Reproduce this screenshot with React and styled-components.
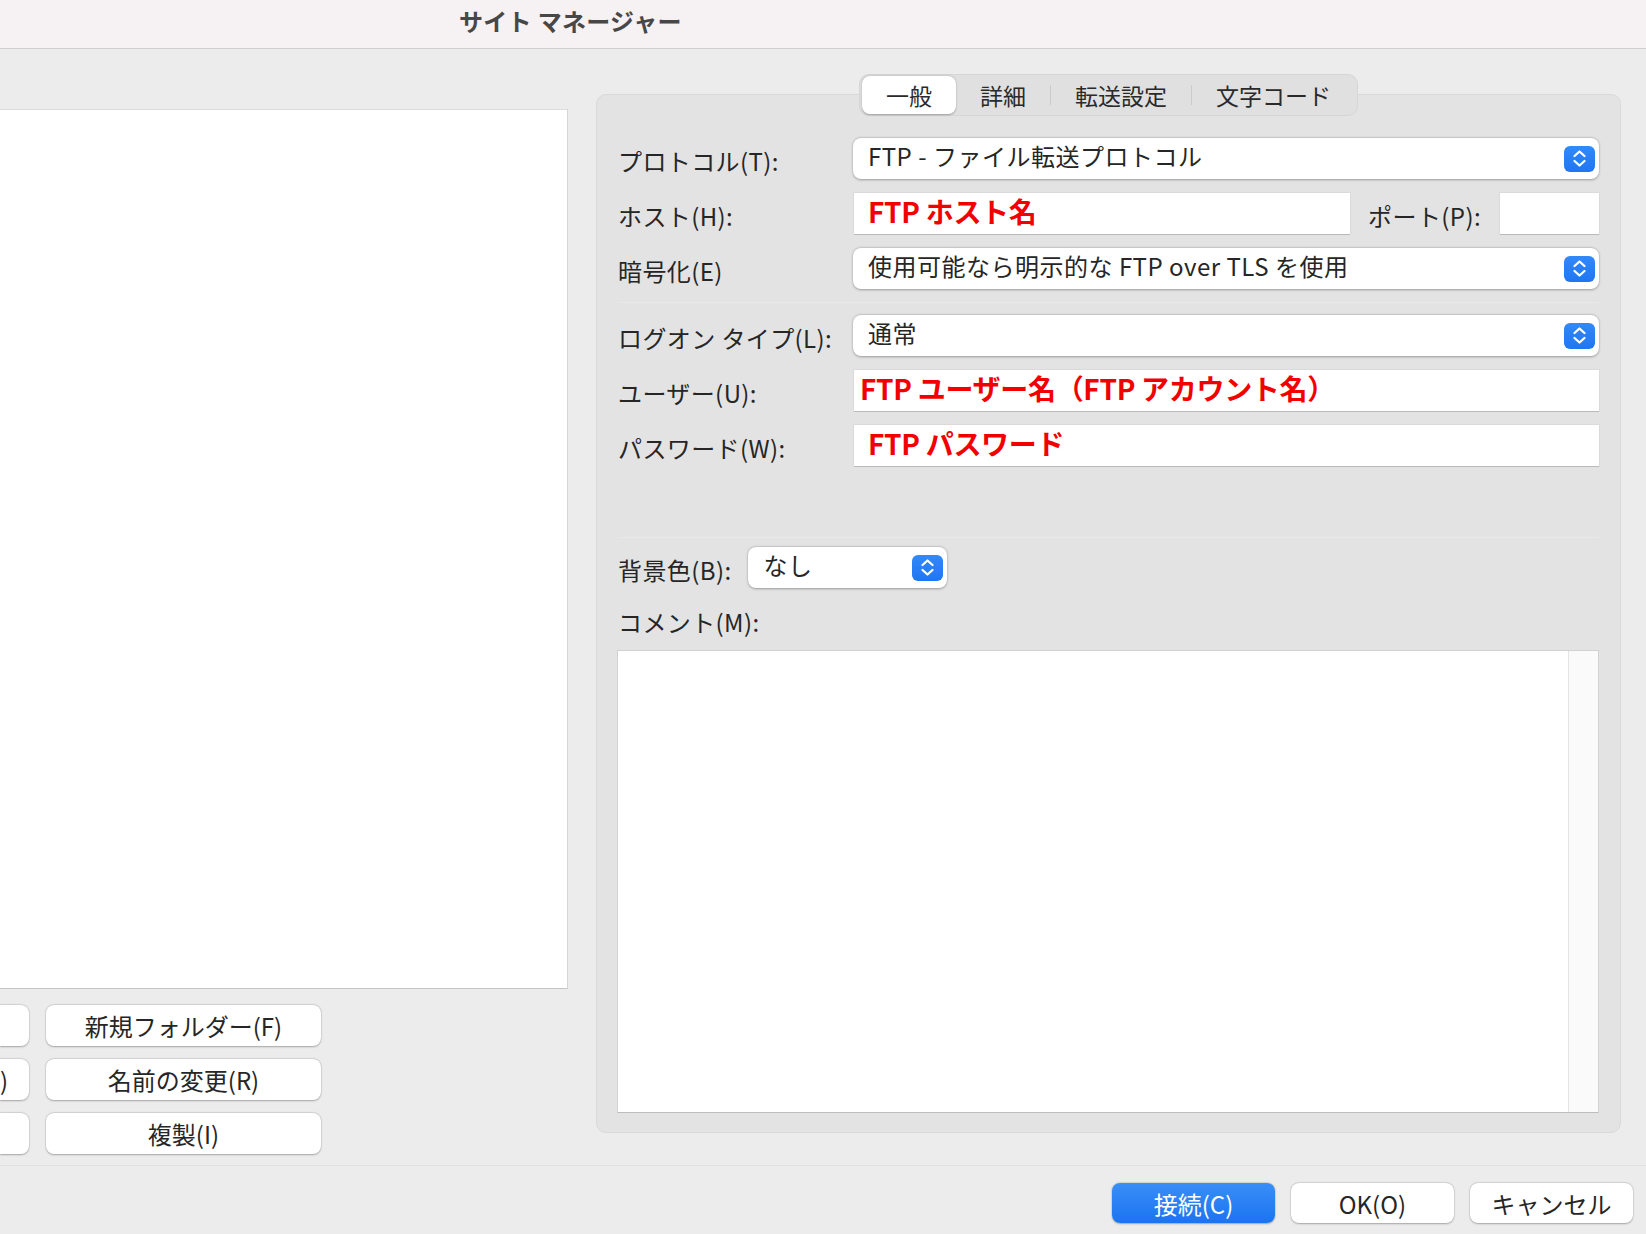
import React from 'react';
import styled, { createGlobalStyle } from 'styled-components';

const FONT = `"Noto Sans CJK JP", "Noto Sans", sans-serif`;

const GlobalStyle = createGlobalStyle`
    html, body {
        margin: 0;
        padding: 0;
        background: #ececec;
    }
    body {
        font-family: ${FONT};
        color: #262626;
    }
    * { box-sizing: border-box; }
`;

const Chevrons = () => (
    <svg width="31" height="25" viewBox="0 0 31 25">
        <path d="M10.5 10 L15.5 5.5 L20.5 10" fill="none" stroke="#fff" strokeWidth="2.3" strokeLinecap="round" strokeLinejoin="round" />
        <path d="M10.5 15 L15.5 19.5 L20.5 15" fill="none" stroke="#fff" strokeWidth="2.3" strokeLinecap="round" strokeLinejoin="round" />
    </svg>
);

const PopUp = ({ value, width }) => (
    <Select $width={width}>
        <SelectValue>{value}</SelectValue>
        <ArrowBox><Chevrons /></ArrowBox>
    </Select>
);

const App = () => {
    return (
        <>
            <GlobalStyle />
            <Window>
                <TitleBar>
                    <TitleText>サイト マネージャー</TitleText>
                </TitleBar>

                <Main>
                    <LeftColumn>
                        <SiteList />
                        <ButtonGrid>
                            <EdgeButton />
                            <SideButton>新規フォルダー(F)</SideButton>
                            <EdgeButton>)</EdgeButton>
                            <SideButton>名前の変更(R)</SideButton>
                            <EdgeButton />
                            <SideButton>複製(I)</SideButton>
                        </ButtonGrid>
                    </LeftColumn>

                    <RightColumn>
                        <Tabs>
                            <Tab $active>一般</Tab>
                            <Tab>詳細</Tab>
                            <TabDivider />
                            <Tab>転送設定</Tab>
                            <TabDivider />
                            <Tab>文字コード</Tab>
                        </Tabs>

                        <Panel>
                            <FieldRow>
                                <Label>プロトコル(T):</Label>
                                <PopUp value="FTP - ファイル転送プロトコル" />
                            </FieldRow>
                            <FieldRow>
                                <Label>ホスト(H):</Label>
                                <Inline>
                                    <TextField><RedText>FTP ホスト名</RedText></TextField>
                                    <PortLabel>ポート(P):</PortLabel>
                                    <TextField $width="99px" />
                                </Inline>
                            </FieldRow>
                            <FieldRow>
                                <Label>暗号化(E)</Label>
                                <PopUp value="使用可能なら明示的な FTP over TLS を使用" />
                            </FieldRow>

                            <Divider />

                            <FieldRow>
                                <Label>ログオン タイプ(L):</Label>
                                <PopUp value="通常" />
                            </FieldRow>
                            <FieldRow>
                                <Label>ユーザー(U):</Label>
                                <TextField><RedText $indent="6px">FTP ユーザー名（FTP アカウント名）</RedText></TextField>
                            </FieldRow>
                            <FieldRow>
                                <Label>パスワード(W):</Label>
                                <TextField><RedText>FTP パスワード</RedText></TextField>
                            </FieldRow>

                            <Divider $gap="58px" $after="8px" />

                            <ColorRow>
                                <Label>背景色(B):</Label>
                                <PopUp value="なし" width="199px" />
                            </ColorRow>
                            <CommentLabel>コメント(M):</CommentLabel>
                            <CommentBox>
                                <Scrollbar />
                            </CommentBox>
                        </Panel>
                    </RightColumn>
                </Main>

                <Footer>
                    <DialogButton $primary>接続(C)</DialogButton>
                    <DialogButton>OK(O)</DialogButton>
                    <DialogButton>キャンセル</DialogButton>
                </Footer>
            </Window>
        </>
    );
};

const Window = styled.div`
    width: 1646px;
    height: 1234px;
    display: flex;
    flex-direction: column;
    background: #ececec;
    overflow: hidden;
`;

const TitleBar = styled.div`
    height: 49px;
    flex-shrink: 0;
    display: flex;
    align-items: center;
    padding-left: 459px;
    background: #f6f1f3;
    border-bottom: 1px solid #d3cfd0;
`;

const TitleText = styled.div`
    font-size: 24px;
    font-weight: 700;
    color: #474747;
    letter-spacing: 0.3px;
    margin-top: -8px;
`;

const Main = styled.div`
    flex: 1;
    display: flex;
    align-items: flex-start;
    border-bottom: 1px solid #e1e1e1;
`;

const LeftColumn = styled.div`
    width: 568px;
    flex-shrink: 0;
    padding-top: 60px;
    display: flex;
    flex-direction: column;
`;

const SiteList = styled.div`
    height: 880px;
    background: #fff;
    border: 1px solid #d6d6d6;
    border-left: none;
    border-top-color: #dcdcdc;
    border-bottom-color: #c4c4c4;
`;

const ButtonGrid = styled.div`
    margin-top: 16px;
    display: grid;
    grid-template-columns: 29px 275px;
    column-gap: 17px;
    row-gap: 13px;
`;

const buttonBase = `
    height: 41px;
    border: none;
    border-radius: 8px;
    font-family: ${FONT};
    font-size: 24px;
    display: flex;
    align-items: center;
    justify-content: center;
    white-space: nowrap;
    padding: 0;
`;

const SideButton = styled.button`
    ${buttonBase}
    background: #fff;
    color: #262626;
    box-shadow: 0 0.5px 2px rgba(0, 0, 0, 0.28), 0 0 0 0.5px rgba(0, 0, 0, 0.08);
`;

const EdgeButton = styled(SideButton)`
    justify-content: flex-start;
    padding-left: 0;
    border-radius: 0 8px 8px 0;
    color: #262626;
`;

const RightColumn = styled.div`
    width: 1025px;
    margin-left: 28px;
    padding-top: 25px;
    display: flex;
    flex-direction: column;
    align-items: center;
`;

const Tabs = styled.div`
    position: relative;
    z-index: 1;
    height: 42px;
    margin-bottom: -22px;
    display: flex;
    align-items: center;
    padding: 0 2px;
    background: #e0e0e0;
    border: 1px solid #d6d6d6;
    border-radius: 10px;
`;

const Tab = styled.div`
    height: 38px;
    padding: 0 24px;
    display: flex;
    align-items: center;
    font-size: 23px;
    color: #2a2a2a;
    border-radius: 8px;
    background: ${({ $active }) => ($active ? '#fff' : 'transparent')};
    box-shadow: ${({ $active }) => ($active ? '0 0.5px 2px rgba(0,0,0,0.3)' : 'none')};
`;

const TabDivider = styled.div`
    width: 1px;
    height: 20px;
    background: #cbcbcb;
`;

const Panel = styled.div`
    width: 100%;
    height: 1039px;
    padding: 43px 21px 19px 21px;
    background: #e3e3e3;
    border: 1px solid #d9d9d9;
    border-radius: 10px;
    display: flex;
    flex-direction: column;
`;

const FieldRow = styled.div`
    display: grid;
    grid-template-columns: 235px 1fr;
    align-items: center;
    height: 41px;
    margin-bottom: 14px;
`;

const Label = styled.div`
    font-size: 24px;
    letter-spacing: 0.4px;
    color: #262626;
    white-space: nowrap;
    padding-top: 3px;
`;

const Inline = styled.div`
    display: flex;
    align-items: center;
`;

const Select = styled.div`
    width: ${({ $width }) => $width || '100%'};
    height: 41px;
    display: flex;
    align-items: center;
    justify-content: space-between;
    background: #fff;
    border-radius: 8px;
    box-shadow: 0 0.5px 2.5px rgba(0, 0, 0, 0.3), 0 0 0 0.5px rgba(0, 0, 0, 0.06);
    padding: 0 4px 0 15px;
`;

const SelectValue = styled.div`
    font-size: 24px;
    letter-spacing: 0.5px;
    color: #262626;
    white-space: nowrap;
    margin-top: -6px;
`;

const ArrowBox = styled.div`
    width: 31px;
    height: 26px;
    border-radius: 6px;
    background: linear-gradient(#3289f8, #1f76f2);
    display: flex;
    align-items: center;
    justify-content: center;
`;

const TextField = styled.div`
    flex: ${({ $width }) => ($width ? 'none' : '1')};
    width: ${({ $width }) => $width || 'auto'};
    height: 41px;
    margin-left: 1px;
    background: #fff;
    box-shadow: 0 1px 0 #b9b9b9, 0 0 0 0.5px #d2d2d2;
    display: flex;
    align-items: center;
`;

const RedText = styled.span`
    font-size: 28px;
    font-weight: 700;
    color: #f20000;
    letter-spacing: -0.3px;
    padding-left: ${({ $indent }) => $indent || '14px'};
    margin-top: -6px;
    white-space: nowrap;
`;

const PortLabel = styled.div`
    font-size: 24px;
    letter-spacing: 0.4px;
    color: #262626;
    margin: 3px 18px 0 18px;
    white-space: nowrap;
`;

const Divider = styled.div`
    height: 1px;
    background: #d5d5d5;
    margin: ${({ $gap }) => $gap || '0px'} 0 ${({ $after }) => $after || '11px'} 0;
    border-bottom: 1px solid #e9e9e9;
    transform: translateY(-1px);
`;

const ColorRow = styled.div`
    display: flex;
    align-items: center;
    gap: 17px;
    height: 41px;
`;

const CommentLabel = styled.div`
    font-size: 24px;
    letter-spacing: 0.4px;
    color: #262626;
    margin-top: 16px;
    height: 34px;
`;

const CommentBox = styled.div`
    flex: 1;
    margin: 12px 0 0 -1px;
    background: #fff;
    border: 1px solid #d2d2d2;
    border-bottom-color: #bdbdbd;
    display: flex;
    justify-content: flex-end;
`;

const Scrollbar = styled.div`
    width: 30px;
    background: #fafafa;
    border-left: 1px solid #e4e4e4;
`;

const Footer = styled.div`
    height: 68px;
    flex-shrink: 0;
    display: flex;
    justify-content: flex-end;
    align-items: flex-start;
    gap: 16px;
    padding: 17px 13px 0 0;
`;

const DialogButton = styled.button`
    ${buttonBase}
    width: 163px;
    height: 40px;
    color: ${({ $primary }) => ($primary ? '#fff' : '#262626')};
    background: ${({ $primary }) => ($primary ? 'linear-gradient(#3a8ef8, #1b74f0)' : '#fff')};
    box-shadow: 0 0.5px 2px rgba(0, 0, 0, 0.28), 0 0 0 0.5px rgba(0, 0, 0, 0.08);
`;

export default App;
